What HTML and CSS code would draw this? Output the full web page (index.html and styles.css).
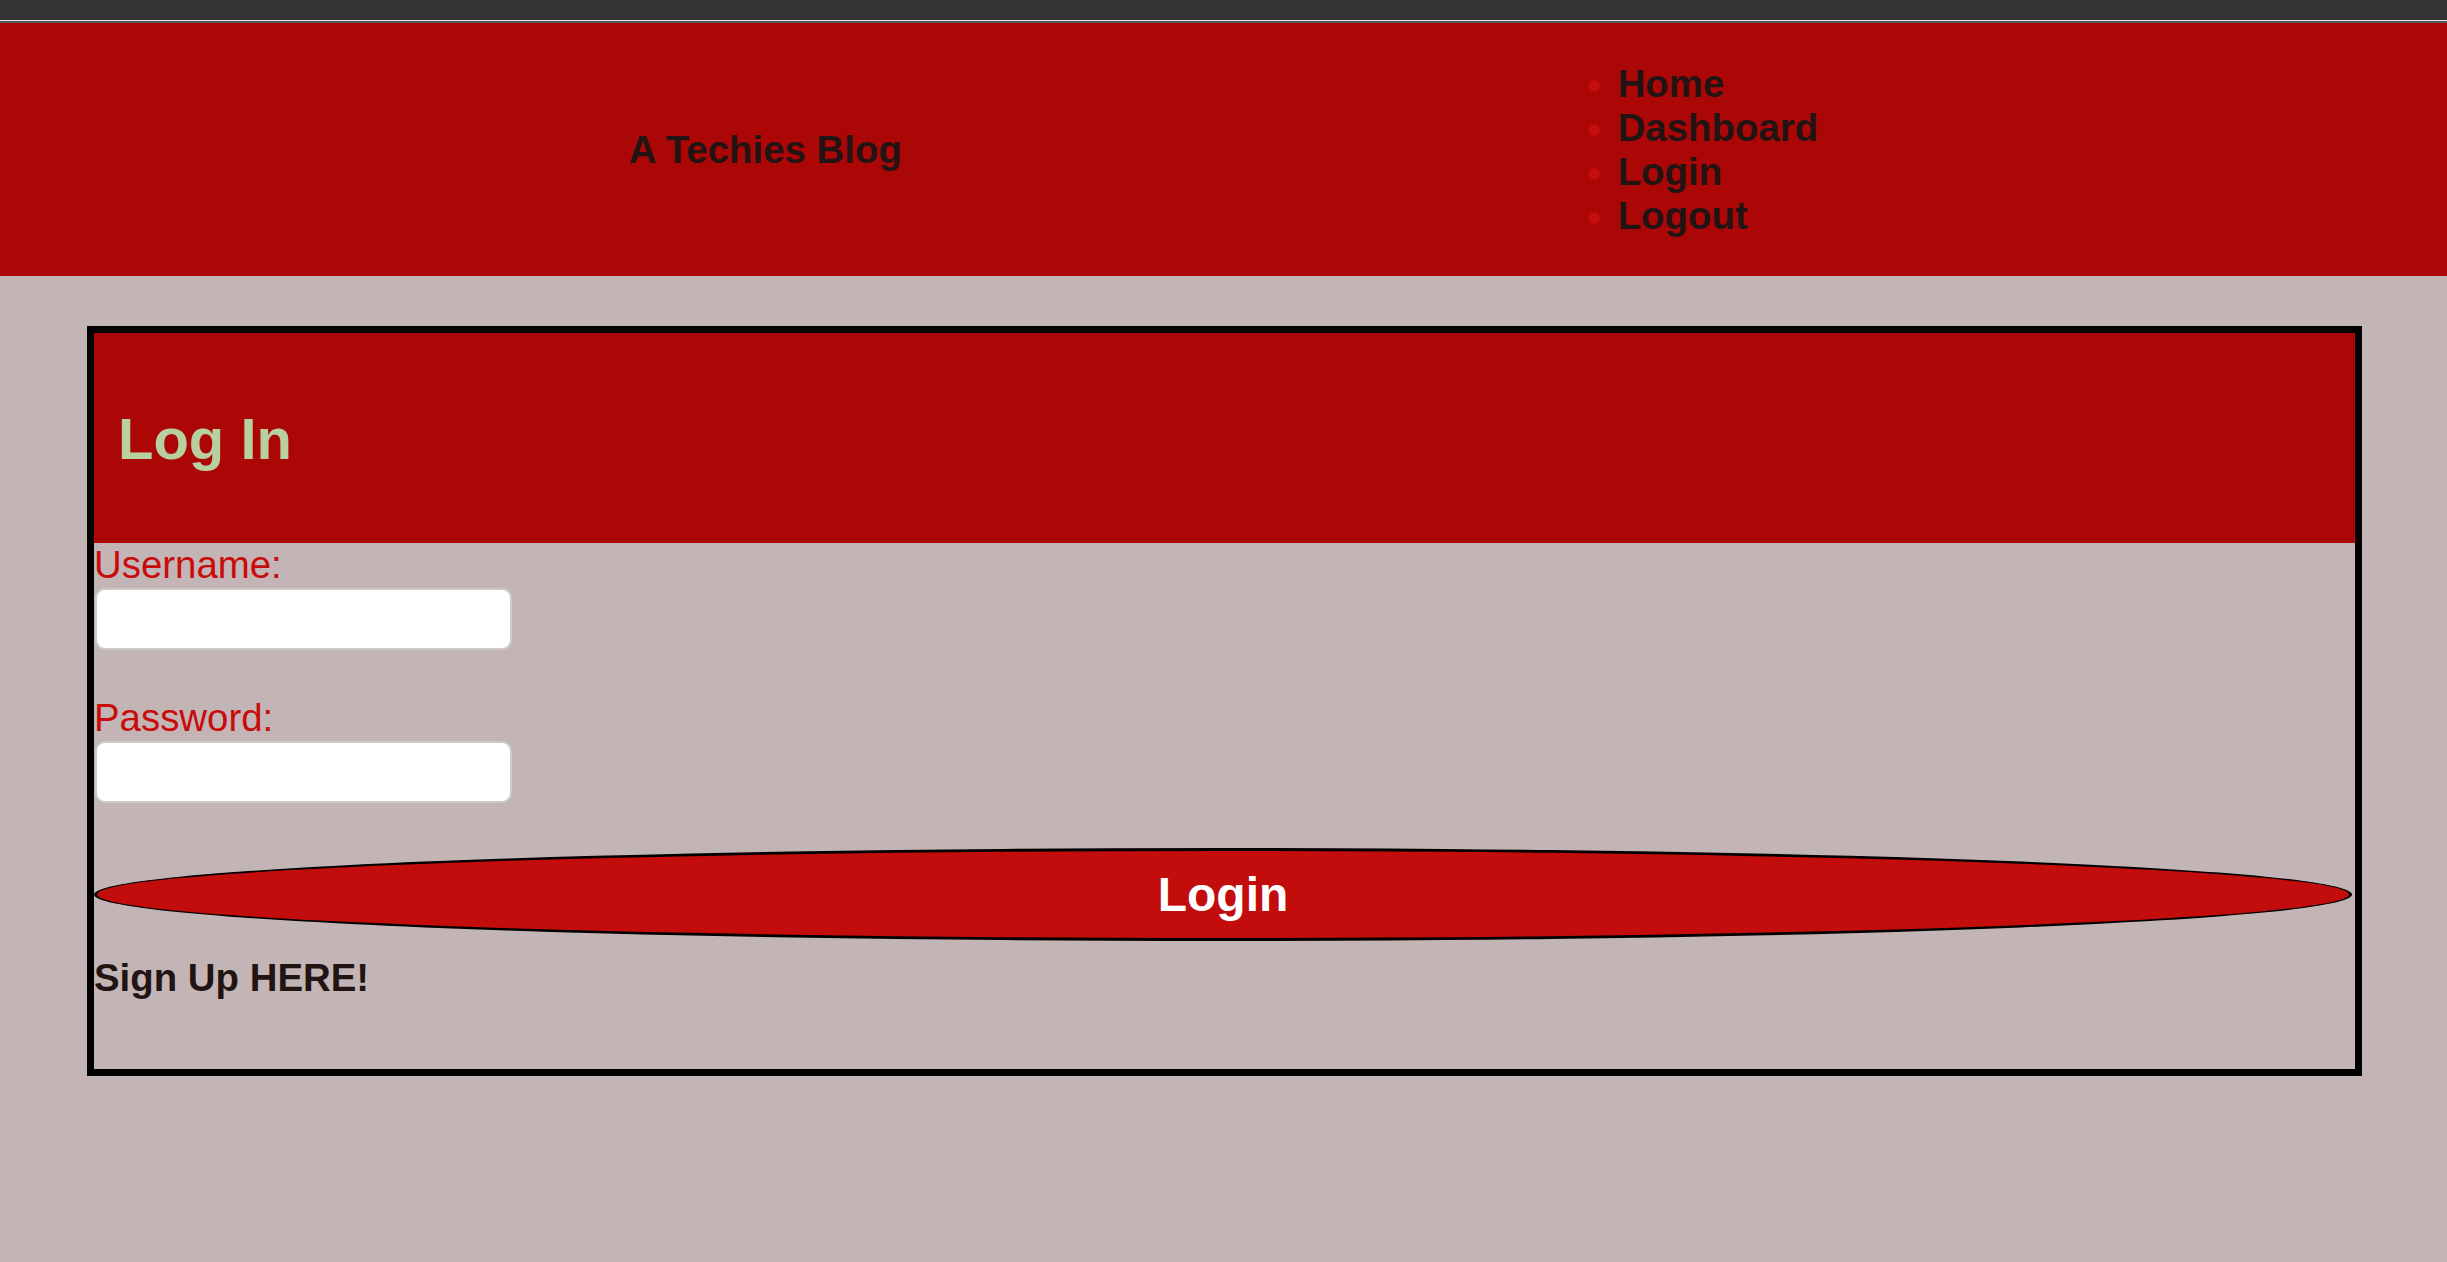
FILE: index.html
```html
<!DOCTYPE html>
<html lang="en">
<head>
  <meta charset="UTF-8" />
  <meta name="viewport" content="width=device-width, initial-scale=1.0" />
  <title>A Techies Blog - Log In</title>
  <link rel="stylesheet" href="styles.css">
</head>
<body>
  <div class="browser-bar"></div>

  <header class="site-header">
    <h1 class="site-title">A Techies Blog</h1>
    <nav>
      <ul class="nav-list">
        <li><a href="#">Home</a></li>
        <li><a href="#">Dashboard</a></li>
        <li><a href="#">Login</a></li>
        <li><a href="#">Logout</a></li>
      </ul>
    </nav>
  </header>

  <main class="login-card">
    <div class="login-head">
      <h2>Log In</h2>
    </div>
    <form class="login-form">
      <label for="username">Username:</label>
      <input type="text" id="username" name="username">
      <label for="password" class="second">Password:</label>
      <input type="password" id="password" name="password">
      <button type="submit" class="login-btn">Login</button>
    </form>
    <a href="#" class="signup-link">Sign Up HERE!</a>
  </main>
</body>
</html>
```

FILE: styles.css
```css
:root {
  --page-bg: #c3b5b5;
  --dark-red: #ab0707;
  --btn-red: #c30c0c;
  --label-red: #c80c0c;
  --ink: #231414;
  --mint: #b8cfa0;
}

body {
  margin: 0;
  font-family: 'Liberation Sans', Arial, sans-serif;
  background: var(--page-bg);
  color: var(--ink);
}

.browser-bar {
  height: 21px;
  background: linear-gradient(#333 20px, #e4e4e4 20px);
  border-bottom: 2px solid #555;
}

.site-header {
  height: 253px;
  background: var(--dark-red);
  display: flex;
  justify-content: space-evenly;
  align-items: center;
}

.site-title {
  margin: 0;
  font-size: 38.4px;
  font-weight: bold;
  color: var(--ink);
}

.nav-list {
  margin: 0;
  padding-left: 87px;
  list-style: disc;
  font-size: 38.4px;
  font-weight: bold;
  line-height: 44px;
}

.nav-list li {
  color: #c40e0e;
}

.nav-list a {
  color: var(--ink);
  text-decoration: none;
}

.login-card {
  margin: 50px 85px 0 87px;
  border: 7px solid #000;
  padding-bottom: 69px;
}

.login-head {
  height: 210px;
  background: var(--dark-red);
  display: flex;
  align-items: center;
  padding-left: 24px;
}

.login-head h2 {
  margin: 0;
  font-size: 58px;
  color: var(--mint);
}

.login-form {
  display: flex;
  flex-direction: column;
  align-items: flex-start;
}

.login-form label {
  font-size: 38.4px;
  line-height: 44px;
  color: var(--label-red);
}

.login-form label.second {
  margin-top: 46px;
}

.login-form input {
  box-sizing: border-box;
  width: 417px;
  height: 62px;
  margin: 1px 0 0 1px;
  background: #fff;
  border: 2px solid #cfcaca;
  border-radius: 10px;
}

.login-btn {
  box-sizing: border-box;
  width: calc(100% - 3px);
  height: 93px;
  margin-top: 45px;
  background: var(--btn-red);
  border: 3px solid #000;
  border-radius: 50%;
  color: #fff;
  font-family: inherit;
  font-size: 48px;
  font-weight: bold;
  cursor: pointer;
}

.signup-link {
  display: block;
  margin-top: 15px;
  font-size: 38.4px;
  line-height: 44px;
  font-weight: bold;
  color: var(--ink);
  text-decoration: none;
}
```
